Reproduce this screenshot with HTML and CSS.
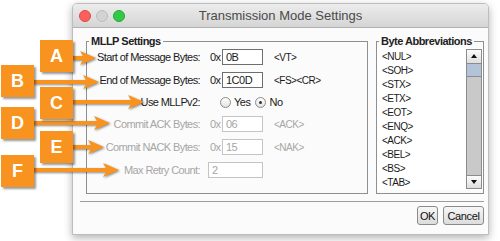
FILE: index.html
```html
<!DOCTYPE html>
<html lang="en">
<head>
    <meta charset="UTF-8">
    <title>Transmission Mode Settings</title>
    <link rel="stylesheet" href="styles.css">
</head>
<body>
    <!-- dialog window -->
    <div class="window">
        <div class="titlebar">
            <div class="lights">
                <span class="light close"></span>
                <span class="light min"></span>
                <span class="light max"></span>
            </div>
            <div class="title">Transmission Mode Settings</div>
            <div></div>
        </div>

        <div class="content">
            <div class="groups">
                <!-- MLLP settings -->
                <fieldset class="group mllp">
                    <legend>MLLP Settings</legend>
                    <div class="rows">
                        <div class="row">
                            <span class="label">Start of Message Bytes:</span>
                            <span class="prefix">0x</span>
                            <span class="field">0B</span>
                            <span class="suffix">&lt;VT&gt;</span>
                        </div>
                        <div class="row">
                            <span class="label">End of Message Bytes:</span>
                            <span class="prefix">0x</span>
                            <span class="field">1C0D</span>
                            <span class="suffix">&lt;FS&gt;&lt;CR&gt;</span>
                        </div>
                        <div class="row short">
                            <span class="label">Use MLLPv2:</span>
                            <span class="radios">
                                <span class="radio"></span><span class="radio-text">Yes</span>
                                <span class="radio checked"></span><span class="radio-text">No</span>
                            </span>
                        </div>
                        <div class="row disabled">
                            <span class="label">Commit ACK Bytes:</span>
                            <span class="prefix">0x</span>
                            <span class="field">06</span>
                            <span class="suffix">&lt;ACK&gt;</span>
                        </div>
                        <div class="row disabled">
                            <span class="label">Commit NACK Bytes:</span>
                            <span class="prefix">0x</span>
                            <span class="field">15</span>
                            <span class="suffix">&lt;NAK&gt;</span>
                        </div>
                        <div class="row disabled">
                            <span class="label">Max Retry Count:</span>
                            <span class="field wide">2</span>
                        </div>
                    </div>
                </fieldset>

                <!-- byte abbreviations list -->
                <fieldset class="group bytes">
                    <legend>Byte Abbreviations</legend>
                    <div class="listbox">
                        <ul class="list">
                            <li>&lt;NUL&gt;</li>
                            <li>&lt;SOH&gt;</li>
                            <li>&lt;STX&gt;</li>
                            <li>&lt;ETX&gt;</li>
                            <li>&lt;EOT&gt;</li>
                            <li>&lt;ENQ&gt;</li>
                            <li>&lt;ACK&gt;</li>
                            <li>&lt;BEL&gt;</li>
                            <li>&lt;BS&gt;</li>
                            <li>&lt;TAB&gt;</li>
                        </ul>
                        <div class="scrollbar">
                            <div class="scroll-btn up"></div>
                            <div class="scroll-thumb"></div>
                            <div class="scroll-track"></div>
                            <div class="scroll-btn down"></div>
                        </div>
                    </div>
                </fieldset>
            </div>

            <div class="separator"></div>

            <div class="buttons">
                <button class="btn ok">OK</button>
                <button class="btn cancel">Cancel</button>
            </div>
        </div>
    </div>

    <!-- annotation callouts -->
    <div class="callouts">
        <svg class="arrows" width="500" height="241" viewBox="0 0 500 241">
            <path d="M72 56 L83 56 L80 51 L96 58 L80 65 L83 60 L72 60 Z"/>
            <path d="M33 80 L86 80 L83 75 L99 82 L83 89 L86 84 L33 84 Z"/>
            <path d="M72 100 L131 100 L128 95 L144 102 L128 109 L131 104 L72 104 Z"/>
            <path d="M33 121 L97 121 L94 116 L110 123 L94 130 L97 125 L33 125 Z"/>
            <path d="M72 145 L91 145 L88 140 L104 147 L88 154 L91 149 L72 149 Z"/>
            <path d="M33 168 L106 168 L103 163 L119 170 L103 177 L106 172 L33 172 Z"/>
        </svg>
        <div class="tag tag-a">A</div>
        <div class="tag tag-b">B</div>
        <div class="tag tag-c">C</div>
        <div class="tag tag-d">D</div>
        <div class="tag tag-e">E</div>
        <div class="tag tag-f">F</div>
    </div>
</body>
</html>
```

FILE: styles.css
```css
/* base */
* {
    margin: 0;
    padding: 0;
    box-sizing: border-box;
}

body {
    position: relative;
    width: 500px;
    height: 241px;
    overflow: hidden;
    background: #fff;
    font-family: "Liberation Sans", Arial, sans-serif;
    font-size: 11px;
    letter-spacing: -0.5px;
    color: #1a1a1a;
}

/* window */
.window {
    margin: 3px 0 0 72px;
    width: 417px;
    height: 232px;
    border: 1px solid #bdbdbd;
    border-radius: 5px 5px 0 0;
    background: #fbfbfb;
    box-shadow: 0 3px 8px rgba(0,0,0,0.3);
}

.titlebar {
    height: 24px;
    display: grid;
    grid-template-columns: 1fr auto 1fr;
    align-items: center;
    background: linear-gradient(#ececec, #d5d5d5);
    border-bottom: 1px solid #b1b1b1;
    border-radius: 4px 4px 0 0;
}

.lights {
    display: flex;
    gap: 5px;
    padding-left: 6px;
}

.light {
    width: 12px;
    height: 12px;
    border-radius: 50%;
}

.light.close {
    background: #fc605b;
    border: 1px solid #de4a44;
}

.light.min {
    background: #d3d3d3;
    border: 1px solid #bdbdbd;
}

.light.max {
    background: #34c84a;
    border: 1px solid #25a834;
}

.title {
    font-size: 13px;
    letter-spacing: 0;
    color: #4a4a4a;
}

/* content */
.content {
    padding: 7px 4px 0 7px;
}

.groups {
    display: flex;
    gap: 8px;
}

.group {
    height: 159px;
    border: 1px solid #8f8f8f;
}

.group legend {
    margin-left: 2px;
    padding: 0 2px;
    font-weight: bold;
    line-height: 13px;
    color: #222;
}

.mllp {
    margin-left: 6px;
    width: 282px;
}

.bytes {
    width: 108px;
}

/* form rows */
.rows {
    display: flex;
    flex-direction: column;
    gap: 7px;
    margin-top: 1px;
}

.row {
    display: flex;
    align-items: center;
    height: 16px;
}

.row.short {
    height: 14px;
}

.label {
    width: 113px;
    text-align: right;
    letter-spacing: -0.6px;
}

.prefix {
    width: 12px;
    margin-left: 10px;
}

.field {
    width: 41px;
    height: 16px;
    padding-left: 3px;
    line-height: 14px;
    border: 1px solid #6e6e6e;
    background: #fff;
}

.field.wide {
    width: 55px;
    margin-left: 8px;
}

.suffix {
    margin-left: 11px;
    font-size: 10px;
}

.radios {
    display: flex;
    align-items: center;
    margin-left: 20px;
}

.radio {
    width: 11px;
    height: 11px;
    border: 1px solid #8a8a8a;
    border-radius: 50%;
    background: linear-gradient(#fff, #e2e2e2);
    position: relative;
}

.radio.checked {
    margin-left: 5px;
}

.radio.checked::after {
    content: "";
    position: absolute;
    left: 3px;
    top: 3px;
    width: 3px;
    height: 3px;
    border-radius: 50%;
    background: #333;
}

.radio-text {
    margin-left: 3px;
}

.row.disabled {
    color: #a6a6a6;
}

.row.disabled .field {
    border-color: #c4c4c4;
    color: #a6a6a6;
}

/* byte list */
.listbox {
    display: flex;
    height: 142px;
    background: #fff;
}

.list {
    flex: 1;
    list-style: none;
    padding: 2px 0 0 5px;
    font-size: 10px;
    line-height: 14px;
}

.scrollbar {
    width: 16px;
    margin: 1px 1px 1px 0;
    display: flex;
    flex-direction: column;
    border: 1px solid #8c8c8c;
}

.scroll-btn {
    height: 13px;
    background: linear-gradient(#fdfdfd, #dedede);
    position: relative;
}

.scroll-btn::after {
    content: "";
    position: absolute;
    left: 4px;
    top: 4px;
    border-left: 3px solid transparent;
    border-right: 3px solid transparent;
}

.scroll-btn.up::after {
    border-bottom: 4px solid #111;
}

.scroll-btn.down {
    border-top: 1px solid #8c8c8c;
}

.scroll-btn.down::after {
    border-top: 4px solid #111;
}

.scroll-thumb {
    height: 14px;
    border-top: 1px solid #8c8c8c;
    border-bottom: 1px solid #8c8c8c;
    background-color: #c3d2e4;
    background-image: radial-gradient(#9fb2c9 0.6px, transparent 0.8px);
    background-size: 2px 2px;
}

.scroll-track {
    flex: 1;
    background: #c9c9c9;
}

/* bottom area */
.separator {
    margin-top: 7px;
    height: 1px;
    background: #9d9d9d;
}

.buttons {
    display: flex;
    justify-content: flex-end;
    gap: 5px;
    margin-top: 4px;
}

.btn {
    height: 19px;
    border: 1px solid #8a8a8a;
    border-radius: 3px;
    background: linear-gradient(#f7f7f7, #dcdcdc);
    font-family: "Liberation Sans", Arial, sans-serif;
    font-size: 11px;
    letter-spacing: -0.4px;
    color: #111;
}

.btn.ok {
    width: 21px;
}

.btn.cancel {
    width: 41px;
}

/* callouts */
.callouts {
    position: absolute;
    inset: 0;
    pointer-events: none;
}

.arrows {
    position: absolute;
    left: 0;
    top: 0;
}

.arrows path {
    fill: #f7931e;
    filter: drop-shadow(1px 1px 1px rgba(0,0,0,0.45));
}

.tag {
    position: absolute;
    width: 33px;
    height: 32px;
    display: flex;
    align-items: center;
    justify-content: center;
    background: #f7931e;
    color: #fff;
    font-size: 18px;
    font-weight: bold;
    letter-spacing: 0;
    box-shadow: 2px 2px 2px rgba(0,0,0,0.4);
}

.tag-a { left: 40px; top: 40px; }
.tag-b { left: 1px; top: 65px; }
.tag-c { left: 40px; top: 87px; }
.tag-d { left: 1px; top: 107px; }
.tag-e { left: 40px; top: 131px; }
.tag-f { left: 1px; top: 155px; }
```
